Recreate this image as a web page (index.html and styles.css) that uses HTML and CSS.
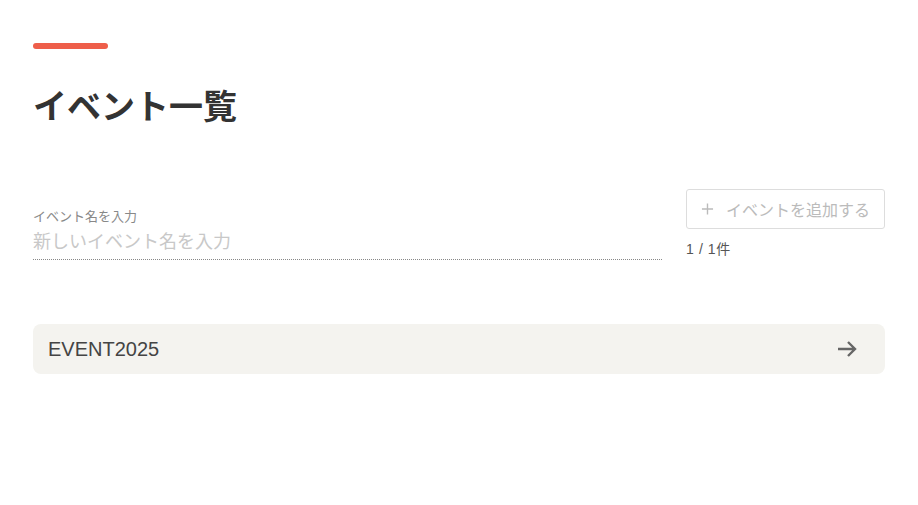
FILE: index.html
```html
<!DOCTYPE html>
<html lang="ja">
<head>
  <meta charset="UTF-8">
  <title>イベント一覧</title>
  <link rel="stylesheet" href="styles.css">
</head>
<body>
  <div class="page">
    <div class="accent"></div>
    <h1>イベント一覧</h1>

    <div class="add-row">
      <label class="field">
        <span class="field-label">イベント名を入力</span>
        <input type="text" placeholder="新しいイベント名を入力">
      </label>
      <div class="add-side">
        <button class="add-btn" disabled>
          <svg width="14" height="14" viewBox="0 0 14 14"><path d="M7 1v12M1 7h12" stroke="#bbb" stroke-width="1.5" fill="none"/></svg>
          イベントを追加する
        </button>
        <div class="count">1 / 1件</div>
      </div>
    </div>

    <div class="list">
      <a class="event" href="#">
        <span>EVENT2025</span>
        <svg width="24" height="24" viewBox="0 0 24 24"><path d="M3 12h17M13 5l7 7-7 7" stroke="#666" stroke-width="2.4" fill="none"/></svg>
      </a>
    </div>
  </div>
</body>
</html>
```

FILE: styles.css
```css
body {
  margin: 0;
  font-family: "Liberation Sans", "Noto Sans CJK JP", sans-serif;
  background: #fff;
  color: #333;
}
.page {
  padding: 43px 33px;
}
.accent {
  width: 75px;
  height: 6px;
  border-radius: 3px;
  background: #ee5e4a;
}
h1 {
  margin: 34px 0 0;
  font-family: "Noto Sans CJK JP", sans-serif;
  font-size: 34px;
  font-weight: 700;
  line-height: 44px;
  color: #333;
}
.add-row {
  display: flex;
  gap: 24px;
  margin-top: 62px;
}
.field {
  flex: 1;
  display: flex;
  flex-direction: column;
  padding-top: 19px;
}
.field-label {
  font-size: 13px;
  line-height: 18px;
  color: #888;
}
.field input {
  border: none;
  border-bottom: 1px dotted #888;
  outline: none;
  padding: 4px 0 5px;
  font-family: inherit;
  font-size: 18px;
  line-height: 24px;
  color: #333;
}
.field input::placeholder {
  color: #c8c8c8;
}
.add-side {
  width: 199px;
}
.add-btn {
  width: 100%;
  height: 40px;
  display: flex;
  align-items: center;
  gap: 12px;
  padding: 0 14px;
  border: 1px solid #ddd;
  border-radius: 3px;
  background: #fff;
  font-family: inherit;
  font-size: 16px;
  white-space: nowrap;
  color: #bbb;
}
.count {
  margin-top: 9px;
  font-size: 14px;
  letter-spacing: 0.6px;
  color: #555;
}
.list {
  margin-top: 64px;
}
.event {
  display: flex;
  align-items: center;
  justify-content: space-between;
  height: 50px;
  padding: 0 26px 0 15px;
  border-radius: 8px;
  background: #f4f3ef;
  text-decoration: none;
  font-size: 20px;
  color: #444;
}
```
